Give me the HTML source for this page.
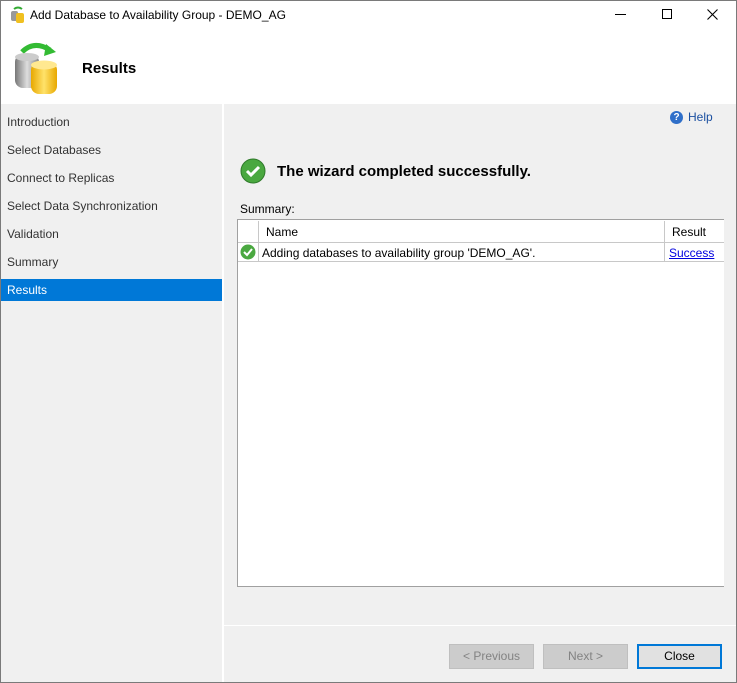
<!DOCTYPE html>
<html><head><style>
*{margin:0;padding:0;box-sizing:border-box}
body{width:737px;height:683px;position:relative;background:#fff;font-family:"Liberation Sans",sans-serif;font-size:12px;color:#000;overflow:hidden}
.abs{position:absolute}
.frame{left:0;top:0;width:737px;height:683px;border:1px solid #7a7a7a}
.nav div{position:absolute;left:1px;width:221px;height:22px;line-height:22px;padding-left:6px;color:#333}
.btn{position:absolute;top:644px;height:25px;width:85px;border:1px solid #bfbfbf;background:#cccccc;color:#838383;text-align:center;line-height:23px}
</style></head><body>
<div class="abs" style="left:1px;top:104px;width:221px;height:578px;background:#f0f0f0"></div>
<div class="abs" style="left:224px;top:104px;width:512px;height:578px;background:#f0f0f0"></div>
<div class="abs" style="left:224px;top:625px;width:512px;height:1px;background:#fff"></div>
<!-- title -->
<svg class="abs" style="left:9px;top:6px" width="18" height="18" viewBox="0 0 18 18"><path d="M5 3 Q9 0 13 3" stroke="#3a3" stroke-width="2" fill="none"/><rect x="2" y="5" width="7" height="10" rx="2" fill="#999"/><rect x="7" y="7" width="8" height="10" rx="2" fill="#f0c020"/></svg>
<div class="abs" style="left:30px;top:8px;font-size:12px">Add Database to Availability Group - DEMO_AG</div>
<div class="abs" style="left:615px;top:14px;width:11px;height:1px;background:#000"></div>
<div class="abs" style="left:662px;top:9px;width:10px;height:10px;border:1px solid #000"></div>
<svg class="abs" style="left:707px;top:9px" width="11" height="11" viewBox="0 0 11 11"><path d="M0.5 0.5 L10.5 10.5 M10.5 0.5 L0.5 10.5" stroke="#000" stroke-width="1.1"/></svg>
<!-- header icon -->
<svg class="abs" style="left:12px;top:38px" width="52" height="58" viewBox="0 0 52 58">
<defs><linearGradient id="g" x1="0" x2="1"><stop offset="0" stop-color="#777"/><stop offset=".5" stop-color="#ddd"/><stop offset="1" stop-color="#888"/></linearGradient>
<linearGradient id="y" x1="0" x2="1"><stop offset="0" stop-color="#e8a800"/><stop offset=".5" stop-color="#ffe26a"/><stop offset="1" stop-color="#e8a800"/></linearGradient></defs>
<path d="M10 14 Q22 2 38 12" stroke="#3b3" stroke-width="5" fill="none"/><path d="M34 6 L44 14 L32 18Z" fill="#3b3"/>
<rect x="3" y="16" width="24" height="34" rx="8" fill="url(#g)"/><ellipse cx="15" cy="19" rx="12" ry="4" fill="#ccc"/>
<rect x="19" y="24" width="26" height="32" rx="8" fill="url(#y)"/><ellipse cx="32" cy="27" rx="13" ry="4.5" fill="#ffe890"/>
</svg>
<div class="abs" style="left:82px;top:60px;font-size:15px;font-weight:bold">Results</div>
<!-- nav -->
<div class="nav">
<div style="top:111px">Introduction</div>
<div style="top:139px">Select Databases</div>
<div style="top:167px">Connect to Replicas</div>
<div style="top:195px">Select Data Synchronization</div>
<div style="top:223px">Validation</div>
<div style="top:251px">Summary</div>
<div style="top:279px;background:#0078d7;color:#fff">Results</div>
</div>
<!-- help -->
<div class="abs" style="left:670px;top:111px;width:13px;height:13px;border-radius:50%;background:#2f6fc9;color:#fff;font-size:10px;font-weight:bold;text-align:center;line-height:13px">?</div>
<div class="abs" style="left:688px;top:110px;color:#1a4fa0">Help</div>
<!-- success -->
<svg class="abs" style="left:240px;top:158px" width="26" height="26" viewBox="0 0 26 26"><circle cx="13" cy="13" r="12" fill="#4aa840" stroke="#2f7a2a"/><path d="M7 13 L11 17 L19 9" stroke="#fff" stroke-width="3" fill="none"/></svg>
<div class="abs" style="left:277px;top:163px;font-size:15px;font-weight:bold">The wizard completed successfully.</div>
<div class="abs" style="left:240px;top:202px">Summary:</div>
<!-- table -->
<div class="abs" style="left:237px;top:219px;width:487px;height:368px;background:#fff;border:1px solid #a0a0a0;border-right:none"></div>
<div class="abs" style="left:238px;top:242px;width:486px;height:1px;background:#c8c8c8"></div>
<div class="abs" style="left:238px;top:261px;width:486px;height:1px;background:#c8c8c8"></div>
<div class="abs" style="left:258px;top:221px;width:1px;height:41px;background:#c8c8c8"></div>
<div class="abs" style="left:664px;top:221px;width:1px;height:41px;background:#c8c8c8"></div>
<div class="abs" style="left:266px;top:225px">Name</div>
<div class="abs" style="left:672px;top:225px">Result</div>
<svg class="abs" style="left:240px;top:244px" width="16" height="16" viewBox="0 0 16 16"><circle cx="8" cy="8" r="7.5" fill="#4aa840"/><path d="M4 8 L7 11 L12 5" stroke="#fff" stroke-width="2" fill="none"/></svg>
<div class="abs" style="left:262px;top:246px">Adding databases to availability group 'DEMO_AG'.</div>
<div class="abs" style="left:669px;top:246px;color:#0000e0;text-decoration:underline">Success</div>
<!-- buttons -->
<div class="btn" style="left:449px">&lt; Previous</div>
<div class="btn" style="left:543px">Next &gt;</div>
<div class="btn" style="left:637px;border:2px solid #0078d7;background:#e1e1e1;color:#000;line-height:21px">Close</div>
<div class="abs frame"></div>
</body></html>
